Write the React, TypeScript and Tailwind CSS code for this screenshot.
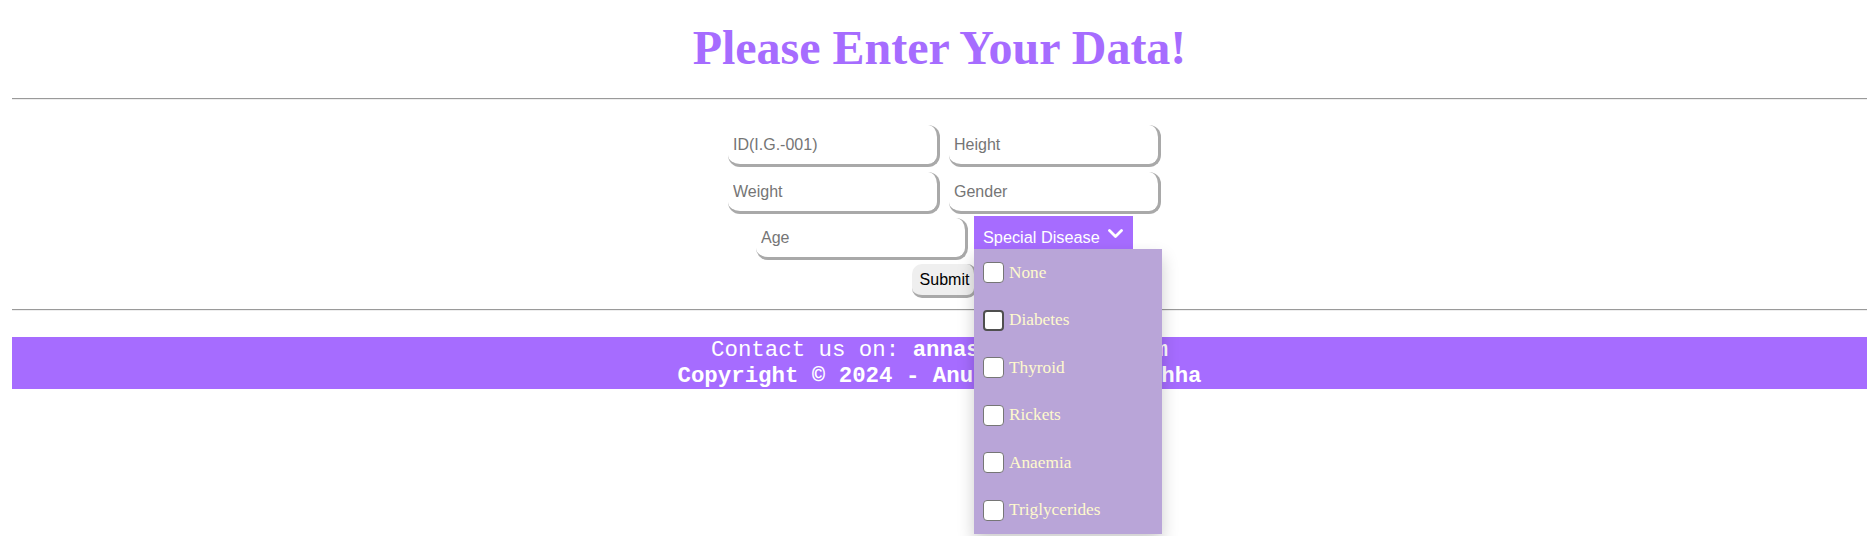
const diseases = ["None", "Diabetes", "Thyroid", "Rickets", "Anaemia", "Triglycerides"];

function Field({ placeholder, className = "" }: { placeholder: string; className?: string }) {
  return (
    <input
      type="text"
      placeholder={placeholder}
      className={
        "h-[42px] w-[212px] rounded-[12px] border-r-[3px] border-b-[3px] border-[#a9a9a9] bg-white pl-[5px] text-[16px] text-black outline-none placeholder:text-[#757575] " +
        className
      }
    />
  );
}

function Rule() {
  return <div className="h-[2px] border-t border-b border-t-[#9a9a9a] border-b-[#eeeeee]" />;
}

export default function App() {
  return (
    <div className="min-h-[536px] bg-white pl-[12px] pr-[8px] font-['Liberation_Sans',Arial,sans-serif]">
      <h1 className="pt-[22px] text-center font-['Liberation_Serif',Georgia,serif] text-[48px] font-bold leading-[52px] text-[#a66cff]">
        Please Enter Your Data!
      </h1>

      <div className="mt-[24px]">
        <Rule />
      </div>

      <form className="flex flex-col items-center pt-[25px] pl-[10px]" onSubmit={(e) => e.preventDefault()}>
        <div className="flex gap-[9px]">
          <Field placeholder="ID(I.G.-001)" />
          <Field placeholder="Height" />
        </div>
        <div className="mt-[5px] flex gap-[9px]">
          <Field placeholder="Weight" />
          <Field placeholder="Gender" />
        </div>
        <div className="mt-[2px] flex items-start gap-[6px]">
          <Field placeholder="Age" className="mt-[2px] h-[41px] w-[210px] pl-[4px]" />
          <div className="relative">
            <button
              type="button"
              className="flex h-[33px] w-[159px] items-start bg-[#a66cff] pl-[9px] pt-[12px] text-[16.3px] leading-[19px] text-white"
            >
              Special Disease
              <svg width="15" height="10" viewBox="0 0 15 10" className="ml-[8px] mt-[1px]">
                <polyline points="1.5,1.5 7.5,7.5 13.5,1.5" fill="none" stroke="white" strokeWidth="2.8" strokeLinecap="round" strokeLinejoin="round" />
              </svg>
            </button>
            <div className="absolute left-0 top-[33px] z-10 w-[188px] bg-[#b9a5d8] shadow-[0px_8px_16px_0px_rgba(0,0,0,0.2)]">
              {diseases.map((d, i) => (
                <label key={d} className="flex h-[47.5px] items-center pl-[9px]">
                  <span
                    className={
                      "h-[21px] w-[21px] shrink-0 rounded-[4px] bg-white " +
                      (i === 1 ? "border-2 border-[#4f4f4f]" : "border-[1.5px] border-[#767676]")
                    }
                  />
                  <span className="ml-[5px] font-['Liberation_Serif',serif] text-[17.3px] text-[#fffacd]">{d}</span>
                </label>
              ))}
            </div>
          </div>
        </div>
        <button
          type="submit"
          className="mt-[4px] h-[34px] rounded-[10px] border-r-[3px] border-b-[3px] border-[#a9a9a9] bg-[#efefef] pl-[8px] pr-[5px] text-[16px] text-black"
        >
          Submit
        </button>
      </form>

      <div className="mt-[11px]">
        <Rule />
      </div>

      <footer className="mt-[26px] bg-[#a66cff] text-center font-['Liberation_Mono','Courier_New',monospace] text-[22.4px] leading-[26px] text-white">
        <p>
          Contact us on: <b>annasmith@gmail.com</b>
        </p>
        <p className="font-bold">Copyright © 2024 - Anuradha Singh Ojhha</p>
      </footer>
    </div>
  );
}
